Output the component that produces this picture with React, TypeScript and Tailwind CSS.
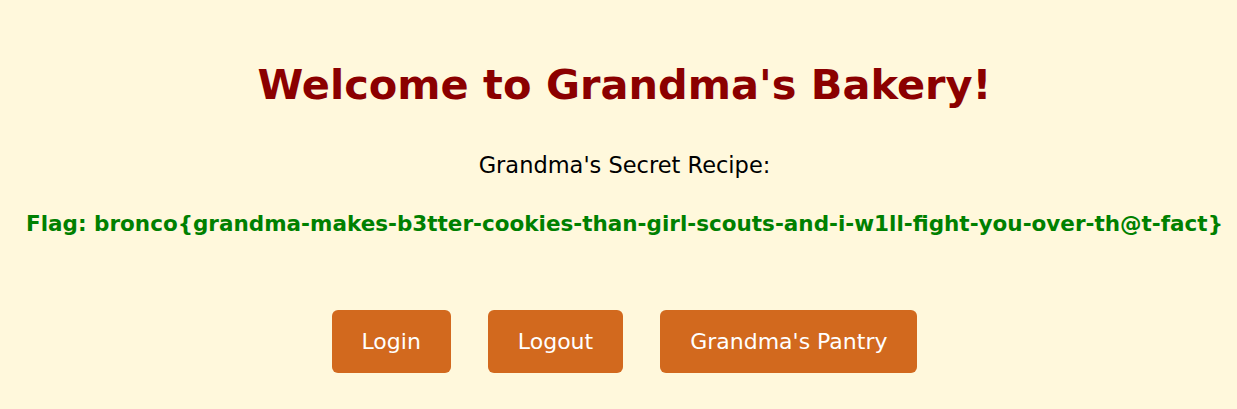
export default function App() {
  const buttons = ["Login", "Logout", "Grandma's Pantry"];

  return (
    <div className="min-h-[409px] bg-[#fff8dc] pl-3 pt-[57px] font-['Comic_Sans_MS','DejaVu_Sans',sans-serif] text-center">
      <h1 className="text-[41.5px] font-bold leading-[56px] text-[#8b0000]">
        Welcome to Grandma's Bakery!
      </h1>
      <p className="mt-[37px] text-[22.5px] leading-[30px] text-black">
        Grandma's Secret Recipe:
      </p>
      <p className="mt-[29px] whitespace-nowrap text-[21.5px] font-bold leading-[30px] text-[#008000]">
        Flag: bronco{"{"}grandma-makes-b3tter-cookies-than-girl-scouts-and-i-w1ll-fight-you-over-th@t-fact{"}"}
      </p>
      <div className="mt-[71px] flex justify-center gap-[37px]">
        {buttons.map((b) => (
          <button
            key={b}
            type="button"
            className="h-[63px] rounded-[6px] bg-[#d2691e] px-[30px] text-[22px] text-white"
          >
            {b}
          </button>
        ))}
      </div>
    </div>
  );
}
